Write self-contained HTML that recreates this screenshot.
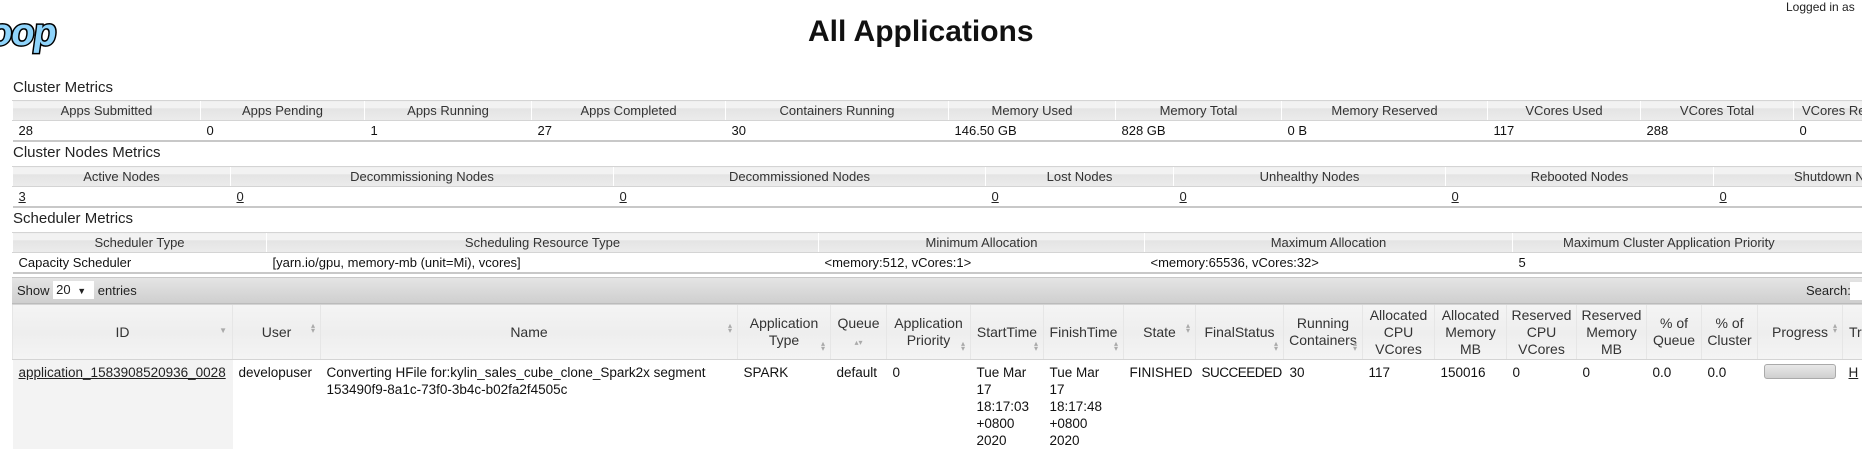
<!DOCTYPE html>
<html><head><meta charset="utf-8"><style>
*{margin:0;padding:0;box-sizing:border-box}
html,body{width:1862px;height:447px;overflow:hidden;background:#fff;font-family:"Liberation Sans",sans-serif;color:#222}
.abs{position:absolute}
.h3{position:absolute;left:13px;font-size:15px;color:#222}
table{position:absolute;left:12px;border-collapse:collapse;table-layout:fixed;font-size:13px}
th{font-weight:normal;color:#333;height:20px;background:linear-gradient(#f2f2f2 0,#f2f2f2 35%,#e4e4e4 36%,#ececec 100%);border-left:1px solid #fff;border-top:1px solid #d4d4d4;border-bottom:1px solid #d4d4d4;text-align:center;white-space:nowrap;overflow:hidden}
td{height:20px;padding-left:6px;border-bottom:2px solid #c8c8c8;white-space:nowrap;overflow:hidden;color:#111}
td u{color:#222}
#apps{font-size:14px}
#apps th{height:55px;line-height:17px;white-space:normal;vertical-align:middle;position:relative;border-left:1px solid #e6e6e6;background:linear-gradient(#f4f4f4 0,#eeeeee 50%,#f4f4f4 100%)}
#apps td{vertical-align:top;padding-top:4px;line-height:17px;height:89px;border:none;white-space:normal;padding-left:6px;padding-right:8px;font-size:13.5px}
.s{position:absolute;right:5px;bottom:8px;font-size:8px;color:#aaa;line-height:5px}
</style></head><body>
<div class="abs" style="left:1786px;top:0px;font-size:12px;color:#222">Logged in as</div>
<svg class="abs" style="left:0;top:14px" width="80" height="48"><text x="-8" y="31" font-family="Liberation Sans" font-weight="bold" font-size="38" fill="#8fd4fb" stroke="#000" stroke-width="3" paint-order="stroke" letter-spacing="-1" transform="skewX(-8)">oop</text></svg>
<div class="abs" style="left:808px;top:15px;font-size:30px;font-weight:bold;color:#111">All Applications</div>

<div class="h3" style="top:79px">Cluster Metrics</div>
<table style="top:100px;width:1900px">
<colgroup><col style="width:188px"><col style="width:164px"><col style="width:167px"><col style="width:194px"><col style="width:223px"><col style="width:167px"><col style="width:166px"><col style="width:206px"><col style="width:153px"><col style="width:153px"><col style="width:119px"></colgroup>
<tr><th>Apps Submitted</th><th>Apps Pending</th><th>Apps Running</th><th>Apps Completed</th><th>Containers Running</th><th>Memory Used</th><th>Memory Total</th><th>Memory Reserved</th><th>VCores Used</th><th>VCores Total</th><th>VCores Reserved</th></tr>
<tr><td>28</td><td>0</td><td>1</td><td>27</td><td>30</td><td>146.50 GB</td><td>828 GB</td><td>0 B</td><td>117</td><td>288</td><td>0</td></tr>
</table>

<div class="h3" style="top:144px">Cluster Nodes Metrics</div>
<table style="top:166px;width:1930px">
<colgroup><col style="width:218px"><col style="width:383px"><col style="width:372px"><col style="width:188px"><col style="width:272px"><col style="width:268px"><col style="width:229px"></colgroup>
<tr><th>Active Nodes</th><th>Decommissioning Nodes</th><th>Decommissioned Nodes</th><th>Lost Nodes</th><th>Unhealthy Nodes</th><th>Rebooted Nodes</th><th style="text-align:left;padding-left:80px">Shutdown Nodes</th></tr>
<tr><td><u>3</u></td><td><u>0</u></td><td><u>0</u></td><td><u>0</u></td><td><u>0</u></td><td><u>0</u></td><td><u>0</u></td></tr>
</table>

<div class="h3" style="top:210px">Scheduler Metrics</div>
<table style="top:232px;width:1900px">
<colgroup><col style="width:254px"><col style="width:552px"><col style="width:326px"><col style="width:368px"><col style="width:400px"></colgroup>
<tr><th>Scheduler Type</th><th>Scheduling Resource Type</th><th>Minimum Allocation</th><th>Maximum Allocation</th><th style="text-align:left;padding-left:50px">Maximum Cluster Application Priority</th></tr>
<tr><td>Capacity Scheduler</td><td>[yarn.io/gpu, memory-mb (unit=Mi), vcores]</td><td>&lt;memory:512, vCores:1&gt;</td><td>&lt;memory:65536, vCores:32&gt;</td><td>5</td></tr>
</table>

<div class="abs" style="left:12px;top:277px;width:1860px;height:27px;background:linear-gradient(#e4e4e4,#cfcfcf);border-top:1px solid #c8c8c8;border-bottom:1px solid #bbb;font-size:13px;line-height:26px;padding-left:5px">Show <span style="display:inline-block;background:#fff;width:41px;height:18px;line-height:18px;padding-left:3px;vertical-align:middle;margin-top:-3px">20 <span style="font-size:9px;margin-left:3px">▼</span></span> entries
<span class="abs" style="left:1794px;top:0">Search:</span><span class="abs" style="left:1838px;top:4px;width:30px;height:18px;background:#fff"></span></div>

<table id="apps" style="top:304px;width:1950px">
<colgroup><col style="width:220px"><col style="width:88px"><col style="width:417px"><col style="width:93px"><col style="width:56px"><col style="width:84px"><col style="width:73px"><col style="width:80px"><col style="width:72px"><col style="width:88px"><col style="width:79px"><col style="width:72px"><col style="width:72px"><col style="width:70px"><col style="width:70px"><col style="width:55px"><col style="width:56px"><col style="width:85px"><col style="width:120px"></colgroup>
<tr><th>ID<span class="s" style="bottom:26px">▼</span></th><th>User<span class="s" style="bottom:26px">▴<br>▾</span></th><th>Name<span class="s" style="bottom:26px">▴<br>▾</span></th><th>Application Type<span class="s">▴<br>▾</span></th><th>Queue<br><span style="font-size:8px;color:#aaa;line-height:8px">▴▾</span></th><th>Application Priority<span class="s">▴<br>▾</span></th><th>StartTime<span class="s">▴<br>▾</span></th><th>FinishTime<span class="s">▴<br>▾</span></th><th>State<span class="s" style="bottom:26px">▴<br>▾</span></th><th>FinalStatus<span class="s">▴<br>▾</span></th><th>Running Containers<span class="s">▴<br>▾</span></th><th>Allocated CPU VCores</th><th>Allocated Memory MB</th><th>Reserved CPU VCores</th><th>Reserved Memory MB</th><th>% of Queue</th><th>% of Cluster</th><th>Progress<span class="s" style="bottom:26px">▴<br>▾</span></th><th style="text-align:left;padding-left:6px">Tr</th></tr>
<tr><td style="background:#f3f3f3;padding-right:0"><u>application_1583908520936_0028</u></td><td style="padding-right:0">developuser</td><td>Converting HFile for:kylin_sales_cube_clone_Spark2x segment 153490f9-8a1c-73f0-3b4c-b02fa2f4505c</td><td>SPARK</td><td>default</td><td>0</td><td>Tue Mar 17 18:17:03 +0800 2020</td><td>Tue Mar 17 18:17:48 +0800 2020</td><td style="padding-right:0">FINISHED</td><td style="padding-right:0;letter-spacing:-0.5px">SUCCEEDED</td><td>30</td><td>117</td><td>150016</td><td>0</td><td>0</td><td>0.0</td><td>0.0</td><td><div style="width:72px;height:15px;border:1px solid #aaa;border-radius:3px;background:linear-gradient(#e8e8e8,#cfcfcf)"></div></td><td><u>H</u></td></tr>
</table>
</body></html>
